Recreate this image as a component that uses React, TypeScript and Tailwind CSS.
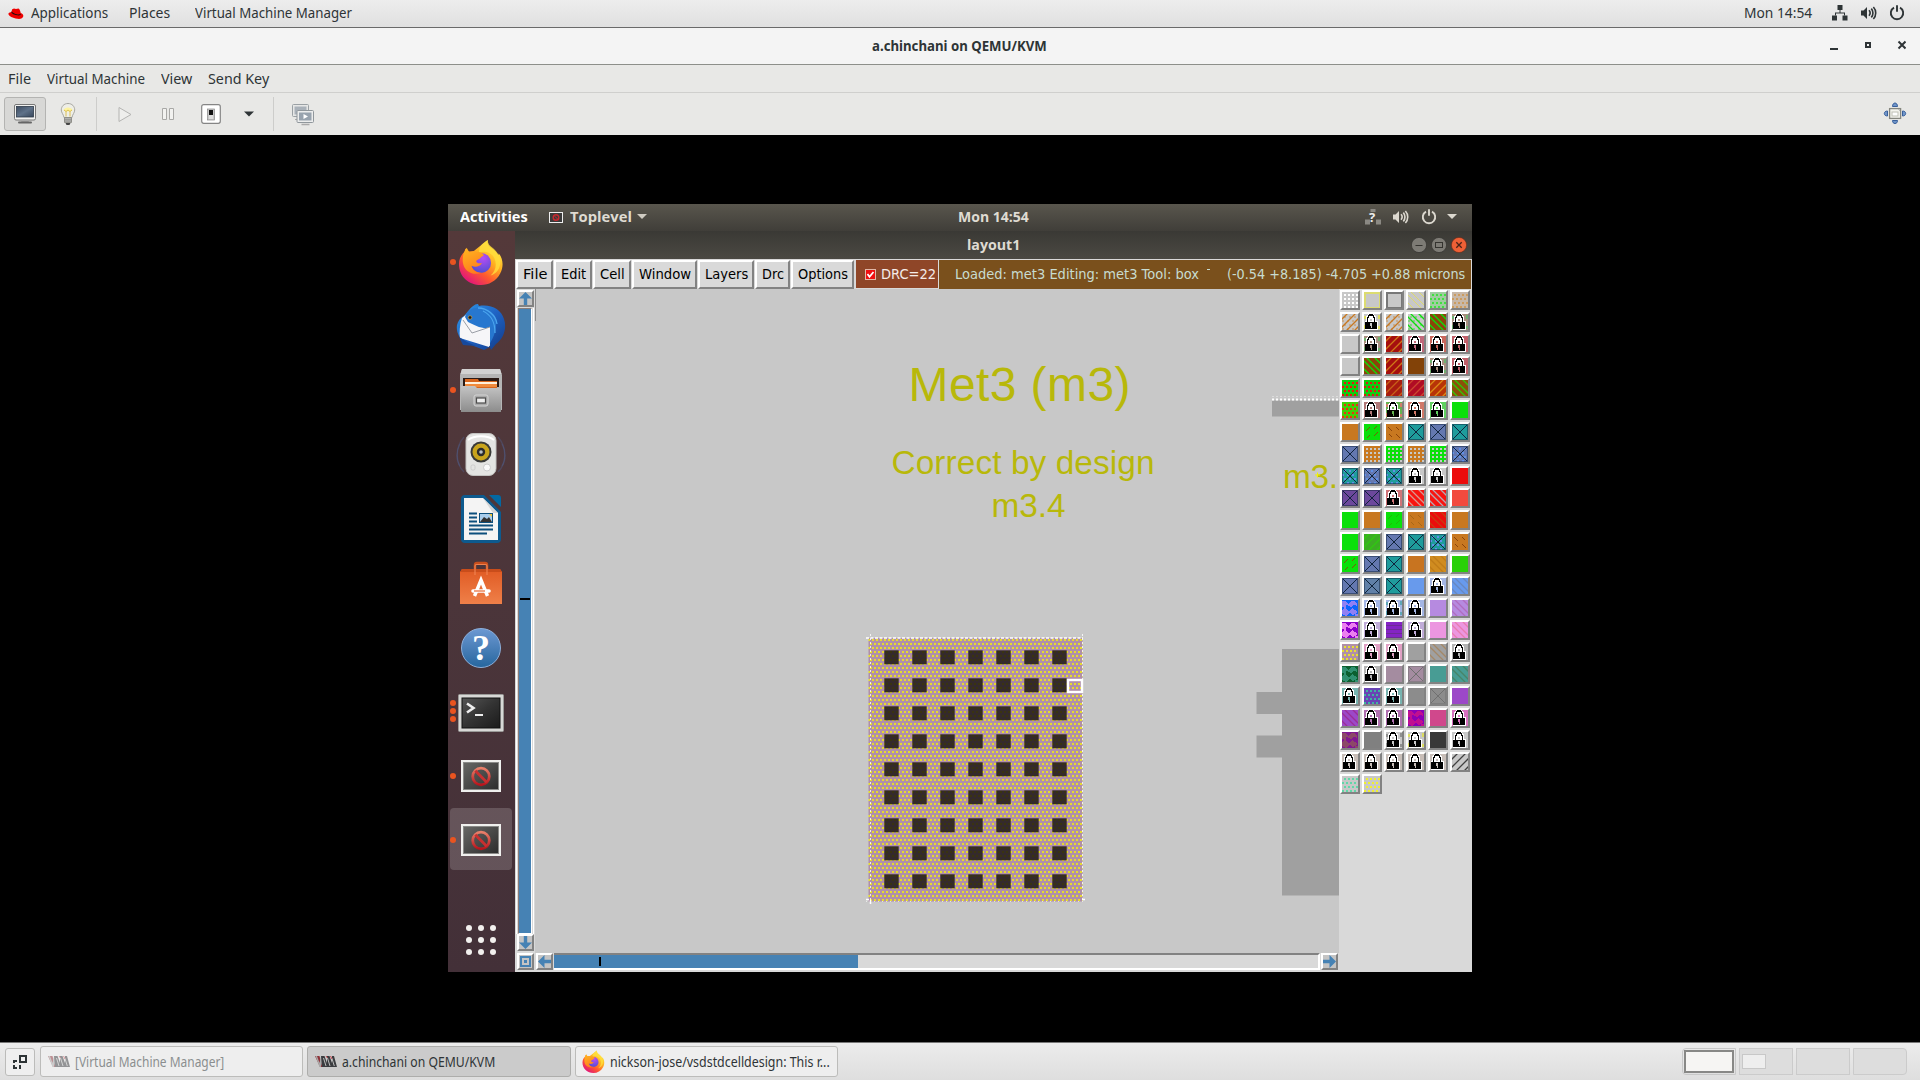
import React, { useLayoutEffect, useRef, useState } from "react";

/* Text set to an exact advance width by horizontal scaling. */
function Fit({ w, className = "", children }: { w: number; className?: string; children: string }) {
  const ref = useRef<HTMLSpanElement>(null);
  const [k, setK] = useState(1);
  useLayoutEffect(() => {
    const measure = () => {
      if (ref.current && ref.current.offsetWidth) setK(w / ref.current.offsetWidth);
    };
    measure();
    document.fonts?.ready.then(measure);
  }, [w, children]);
  return (
    <span className={`block shrink-0 whitespace-pre ${className}`} style={{ width: w }}>
      <span ref={ref} className="inline-block origin-left" style={{ transform: `scaleX(${k})` }}>
        {children}
      </span>
    </span>
  );
}

/* ---------- Host desktop icons ---------- */

const RedHat = () => (
  <svg width="16" height="12" viewBox="0 0 16 12">
    <path d="M4.2 1.2 6 .4 8 1l2.400-.5c1.200.4 2 2.500 2.300 4.500 1.700.6 2.900 1.900 2.600 3.300-.3 1.900-2.700 2.900-6 2.500C5 10.300.6 8.200.4 5.800c0-1 1.200-1.600 2.900-1.600z" fill="#e00" />
    <path d="M3.300 4.300c.6 1.500 3 2.700 5.700 3 2 .3 3.600 0 3.700-.8v-.8c-.6.900-2.300.9-4.200.5-2.200-.5-4.200-1.500-4.900-2.700z" fill="#111" />
  </svg>
);

const Network = () => (
  <svg width="16" height="16" viewBox="0 0 16 16" fill="#2e3436">
    <path d="M5.500 0h5v5h-5zM0 10.500h5v5H0zM10.500 10.500h5v5h-5z" />
    <path d="M7.500 5h1v2.500H13v3h-1v-2H4v2H3v-3h4.500z" />
  </svg>
);

const Speaker = ({ c }: { c: string }) => (
  <svg width="17" height="16" viewBox="0 0 17 16" fill="none" stroke={c} strokeWidth="1.600">
    <path d="M1 5.500h2.500L7 2v12L3.500 10.500H1z" fill={c} stroke="none" />
    <path d="M9 5.300c1.300 1.500 1.300 3.900 0 5.400M11.300 3.600c2.200 2.500 2.200 6.300 0 8.800M13.400 2c3.100 3.400 3.100 8.600 0 12" />
  </svg>
);

const Power = ({ c }: { c: string }) => (
  <svg width="16" height="16" viewBox="0 0 16 16" fill="none" stroke={c} strokeWidth="1.900">
    <path d="M5 2.600a6.200 6.200 0 1 0 6 0" />
    <path d="M8 .2v6.600" />
  </svg>
);

const Monitor = () => (
  <svg width="24" height="22" viewBox="0 0 24 22">
    <defs>
      <linearGradient id="scr" x1="0" y1="0" x2="1" y2="1">
        <stop offset="0" stopColor="#3c4b60" />
        <stop offset=".5" stopColor="#5f7289" />
        <stop offset="1" stopColor="#38475b" />
      </linearGradient>
    </defs>
    <rect x="1.500" y="1.500" width="21" height="15.500" rx="1.500" fill="#f2f2f0" stroke="#777" />
    <rect x="3.500" y="3.500" width="17" height="10.500" fill="url(#scr)" stroke="#2f3b4a" strokeWidth=".8" />
    <path d="M9 17h6l1 2H8z" fill="#aaa" />
    <rect x="5" y="18.500" width="14" height="2" rx="1" fill="#666" />
  </svg>
);

const Bulb = () => (
  <svg width="18" height="24" viewBox="0 0 18 24">
    <path d="M9 1.500c-4 0-6.700 2.900-6.700 6.400 0 3 2.200 4.300 2.700 7.600h8c.5-3.300 2.700-4.600 2.700-7.600C15.700 4.400 13 1.500 9 1.500z" fill="#eeeee6" stroke="#a6a6a0" />
    <path d="M4.500 8c1-3.500 8-3.500 9 0-1.500 2-7.500 2-9 0z" fill="#fdf3a0" />
    <path d="M5 8l2 1.500L9 8l2 1.500L13 8M7 9.500v5M11 9.500v5" fill="none" stroke="#d8b948" strokeWidth=".9" />
    <path d="M5.500 15.500h7v5h-7z" fill="#c5c5c2" stroke="#85857f" strokeWidth=".8" />
    <path d="M5.500 17.200h7M5.500 19h7" stroke="#777" strokeWidth=".8" />
    <path d="M6.500 21h5l-1 2h-3z" fill="#444" />
  </svg>
);

const Machines = () => (
  <svg width="24" height="24" viewBox="0 0 24 24">
    <rect x="1.500" y="2.500" width="16" height="12" rx="1" fill="#e6e7e6" stroke="#9aa0a4" />
    <rect x="3.500" y="4.500" width="12" height="8" fill="#a9b1b9" />
    <path d="M4 17.500h5v-2" stroke="#aaa" fill="none" />
    <rect x="6" y="8.500" width="16.500" height="12" rx="1" fill="#eceded" stroke="#90979c" />
    <rect x="8" y="10.500" width="12.500" height="8" fill="#98a3ae" />
    <path d="M12.500 12l4.500 2.500-4.500 2.500z" fill="#fff" />
    <path d="M10.500 22.500h8" stroke="#aaa" strokeWidth="1.500" />
  </svg>
);

const Fullscreen = () => (
  <svg width="24" height="24" viewBox="0 0 24 24">
    <g fill="#6f94c8" stroke="#38609c">
      <path d="M9.500 4.500c0-2 1-3.500 2.500-3.500s2.500 1.500 2.500 3.500zM9.500 18.500c0 2 1 3 2.500 3s2.500-1 2.500-3zM4.500 9C2.500 9 1.300 10 1.300 11.500S2.500 14 4.500 14zM19.500 9c2 0 3.200 1 3.200 2.500S21.500 14 19.500 14z" />
    </g>
    <rect x="6.600" y="6.600" width="11" height="9.800" fill="#f4f4ee" stroke="#85867f" strokeWidth="1.300" />
    <rect x="9" y="10" width="6" height="4" fill="#fff" stroke="#bfc0b6" />
    <path d="M15 7.500h1.500V9" stroke="#bbb" fill="none" />
  </svg>
);

const VmmLogo = ({ dim = false }: { dim?: boolean }) => (
  <svg width="22" height="13" viewBox="0 0 22 13" className={dim ? "opacity-50" : ""}>
    <path d="M0 1h4.500l3 11H5z" fill="#8f3238" />
    <path d="M2 1l2.500 7L6 1h2.500L5.800 12H4.500L.5 1z" fill="#a9a9a9" />
    <path d="M6 1h3.500l2.500 7V1h2.500L17 8V1h2l3 11H7z" fill="#3b3d40" />
    <path d="M8.500 3l2.500 8M12.500 3l2.500 8M16.800 3l2.500 8" stroke="#bdbdbd" strokeWidth="1" />
    <path d="M11 1l1.500 2M15.500 1L17 4" stroke="#c0444c" />
  </svg>
);

const Firefox = ({ size, id }: { size: number; id: string }) => (
  <svg width={size} height={size} viewBox="0 0 48 48">
    <defs>
      <linearGradient id={`${id}a`} x1=".85" y1=".1" x2=".2" y2=".95">
        <stop offset="0" stopColor="#fff04a" />
        <stop offset=".35" stopColor="#ffb020" />
        <stop offset=".65" stopColor="#ff5a2e" />
        <stop offset="1" stopColor="#e0127e" />
      </linearGradient>
      <radialGradient id={`${id}b`} cx=".6" cy=".25" r=".8">
        <stop offset="0" stopColor="#b84cf4" />
        <stop offset="1" stopColor="#4a4fd0" />
      </radialGradient>
      <linearGradient id={`${id}c`} x1=".2" y1="0" x2=".6" y2="1">
        <stop offset="0" stopColor="#ffb51f" />
        <stop offset="1" stopColor="#ff7a1c" />
      </linearGradient>
    </defs>
    <path d="M31 1c-1 5 2 7 6 10 3 3 4 4 5 6l.5-2C47 20 48 29 44 36c-4 8-12 12-20 12C11 48 1 39 1 26c0-6 3-10 6-13l.5-3 3 3 6-.500z" fill={`url(#${id}a)`} />
    <path d="M31 1c-7 4-9 8-9 13 6-2 13 0 16 6 3 7 1 14-4 18 7-2 11-9 10-16-.5-5-4-9-7-12-4-3-6-5-6-9z" fill="#ffdf3c" opacity=".8" />
    <circle cx="24" cy="25" r="10.500" fill={`url(#${id}b)`} />
    <path d="M9 9l3 5c2-1 5-1 7 0 3-1 6 0 8 3l-3 2c-1 2-4 2-5 4 0 2 3 3 6 2-2 4-7 5-11 3 1 4 5 8 11 7-9 4-19-1-20-11-.5-6 1-11 4-15z" fill={`url(#${id}c)`} />
  </svg>
);

/* ---------- Guest dock icons ---------- */

const Thunderbird = () => (
  <svg width="50" height="50" viewBox="0 0 50 50">
    <defs>
      <linearGradient id="tb" x1="0" y1="0" x2="1" y2="1">
        <stop offset="0" stopColor="#2f9be8" />
        <stop offset=".5" stopColor="#1f63c4" />
        <stop offset="1" stopColor="#123a86" />
      </linearGradient>
    </defs>
    <path d="M13 7C17 2 20 1 22 1l1 2c12-2 22 3 25 13 3 9 0 19-8 25l-5 6-1-3-6 3-18-7C3 36 0 29 1 22c1-4 3-7 7-9z" fill="url(#tb)" />
    <path d="M6 15l5-4 6-4 16 19 1 9-1 9-29-9c-1-6 0-14 2-20z" fill="#f6f6f8" />
    <path d="M9 14c2-7 9-10 15-9 8 0 14 6 16 12 1 9-2 17-7 25 1-6 1-12 0-17-8 1-15-3-21-6z" fill="#2777cf" />
    <path d="M22 5c9 0 18 7 19 16M27 8c8 4 12 10 12 22" stroke="#4ba5ee" strokeWidth="1.300" fill="none" />
    <circle cx="14" cy="14.500" r="1.800" fill="#1b1b1b" stroke="#c89b3d" strokeWidth=".7" />
    <path d="M3 34l8 5 9 4-13-1z" fill="#17499c" />
    <path d="M16 30L34 24V43L6 35L5 24L7 17z" fill="#f6f6f8" />
    <path d="M7 17l9 13 18-6" fill="none" stroke="#8f949c" strokeWidth=".9" />
  </svg>
);

const Files = () => (
  <svg width="44" height="46" viewBox="0 0 44 46">
    <defs>
      <linearGradient id="fl" x1="0" y1="0" x2="0" y2="1">
        <stop offset="0" stopColor="#c4c4c4" />
        <stop offset="1" stopColor="#8c8c8c" />
      </linearGradient>
    </defs>
    <path d="M3 1h38l2 6v35H1V7z" fill="#b5b5b5" />
    <path d="M3 1h38l1.500 5h-41z" fill="#d2d2d2" />
    <path d="M4 10h36v9H4z" fill="#2b1b16" />
    <path d="M6 11l13 0 1 2h18v7H6z" fill="#d7651d" />
    <path d="M6 14h32v2H6z" fill="#fff0dc" />
    <path d="M6 16h32v3H6z" fill="#f08a3c" />
    <path d="M2 18h14l2 2h24v24H2z" fill="url(#fl)" />
    <rect x="15" y="27" width="14" height="11" rx="2" fill="#aaa" stroke="#d5d5d5" />
    <rect x="17.500" y="30" width="9" height="5" fill="#eee" stroke="#4d4d4d" strokeWidth="1.200" />
  </svg>
);

const Rhythmbox = () => (
  <svg width="50" height="46" viewBox="0 0 50 46">
    <g fill="none" stroke="#50608c" strokeWidth="1.300">
      <path d="M8 5c-9 10-9 26 0 35M42 5c9 10 9 26 0 35" opacity=".4" />
      <path d="M4 12c-4 7-4 16 0 22M46 12c4 7 4 16 0 22" opacity=".4" />
    </g>
    <rect x="10" y="1.500" width="30" height="42" rx="7" fill="#e4e4e2" stroke="#c2c2c0" />
    <path d="M12 8c6-5 20-5 26 0" stroke="#fff" strokeWidth="2" fill="none" />
    <circle cx="25" cy="20" r="10.500" fill="#3a3a38" />
    <circle cx="25" cy="20" r="8.500" fill="#c9a41c" />
    <circle cx="25" cy="20" r="4.200" fill="#2c2c2c" />
    <circle cx="25" cy="20" r="1.800" fill="#b8c0c8" />
    <circle cx="31" cy="35.500" r="3.500" fill="#fafafa" stroke="#ccc" />
    <rect x="15" y="33" width="4" height="5" rx="1.500" fill="none" stroke="#ccc" />
  </svg>
);

const Writer = () => (
  <svg width="40" height="48" viewBox="0 0 40 48">
    <path d="M4 0h19l17 17v27a4 4 0 0 1-4 4H4a4 4 0 0 1-4-4V4a4 4 0 0 1 4-4z" fill="#0d5a8e" />
    <path d="M28 0h9a3 3 0 0 1 3 3v9z" fill="#0369a3" />
    <path d="M3 3h19l15 15v27H3z" fill="#f4f4f4" />
    <path d="M22 3l15 15h-5z" fill="#d5d5d5" />
    <path d="M8 18.500h8M8 22.500h8M8 26.500h8M8 30.500h24M8 34.500h24M8 38.500h18" stroke="#0d4f7d" strokeWidth="2" />
    <rect x="18.500" y="18.500" width="13" height="9" fill="#a9cdec" stroke="#0d4f7d" />
    <path d="M19 27l4-5 3 2 2-2 3 5z" fill="#333" />
    <path d="M28 19h3v3z" fill="#f4c430" />
  </svg>
);

const Software = () => (
  <svg width="42" height="44" viewBox="0 0 42 44">
    <defs>
      <linearGradient id="sw" x1="0" y1="0" x2="0" y2="1">
        <stop offset="0" stopColor="#e05a23" />
        <stop offset="1" stopColor="#ef8049" />
      </linearGradient>
    </defs>
    <path d="M15 14V4q0-2 2-2h8q2 0 2 2v10" fill="none" stroke="#c84f1d" strokeWidth="2.500" />
    <path d="M2 8h38l2 3v32H0V11z" fill="url(#sw)" />
    <path d="M2 8h38l2 3H0z" fill="#c94d1b" />
    <path d="M15 14V5q0-1.500 1.500-1.500h9Q27 3.500 27 5v9" fill="none" stroke="#ee8250" strokeWidth="1.200" />
    <path d="M14.500 35 L21 19 L27.500 35" fill="none" stroke="#fff" strokeWidth="3.400" />
    <path d="M13 30h16" stroke="#fff" strokeWidth="3.600" strokeLinecap="round" />
    <path d="M14 30h11" stroke="#e8672f" strokeWidth="1.200" />
  </svg>
);

const Help = () => (
  <div className="flex size-10 items-center justify-center rounded-full border border-[#8db0dc] bg-gradient-to-b from-[#6b98d2] to-[#26679f]">
    <span className="font-['Liberation_Serif',serif] text-[36px] leading-none font-bold text-white">?</span>
  </div>
);

const Terminal = () => (
  <svg width="46" height="38" viewBox="0 0 46 38">
    <defs>
      <linearGradient id="tm" x1="0" y1="0" x2="1" y2="1">
        <stop offset="0" stopColor="#555" />
        <stop offset=".5" stopColor="#333" />
        <stop offset="1" stopColor="#1b1b1b" />
      </linearGradient>
    </defs>
    <rect x=".5" y=".5" width="45" height="37" rx="1" fill="#d8d8d6" stroke="#9a9a98" />
    <rect x="4" y="4" width="38" height="30" fill="url(#tm)" stroke="#111" />
    <path d="M9 9.500l6.500 4.500L9 18.500" fill="none" stroke="#eee" strokeWidth="2.600" />
    <path d="M17 21h8" stroke="#eee" strokeWidth="2" />
  </svg>
);

const Forbidden = ({ id }: { id: string }) => (
  <svg width="40" height="32" viewBox="0 0 40 32">
    <defs>
      <linearGradient id={id} x1="0" y1="0" x2="1" y2="1">
        <stop offset="0" stopColor="#6a6a68" />
        <stop offset="1" stopColor="#2a2a2a" />
      </linearGradient>
      <linearGradient id={`${id}r`} x1="0" y1="0" x2="0" y2="1">
        <stop offset="0" stopColor="#e8806a" />
        <stop offset="1" stopColor="#b8141c" />
      </linearGradient>
    </defs>
    <rect x="1" y="1" width="38" height="30" fill={`url(#${id})`} stroke="#f0f0ee" strokeWidth="2" />
    <rect x="2.500" y="2.500" width="35" height="27" fill="none" stroke="#8a8a88" />
    <circle cx="20" cy="16.500" r="8.300" fill="none" stroke={`url(#${id}r)`} strokeWidth="2.800" />
    <path d="M14.300 10.800l11.400 11.400" stroke="#c83030" strokeWidth="2.800" />
  </svg>
);

/* ---------- Layer palette ---------- */

type Kind = "s" | "o" | "d" | "f" | "b" | "fd" | "bd" | "fs" | "bs" | "x" | "xd" | "l" | "w" | "h";
type Sw = [Kind, string, string?];

const C = "#c8c8c8";
const G = "#0ae00a";
const O = "#c87820";
const T = "#1f9c9c";
const B = "#6478b0";

const LAYERS: Sw[] = [
  ["d", C, "#ffffff"], ["o", C, "#dcdc70"], ["o", C, "#787878"], ["b", C, "#e0dc60"], ["d", "#a0cca0", "#40e040"], ["d", "#c8b8a8", "#cc9c60"],
  ["fd", C, O], ["l", C, "#dcdc60"], ["fd", C, O], ["bd", C, G], ["b", "#8c440a", G], ["l", "#a98f7f", "#70b070"],
  ["s", C], ["l", "#a98f7f", "#70b070"], ["f", "#a50f0f", "#d07818"], ["l", "#c0687a"], ["l", "#c8675c"], ["l", "#c0606a"],
  ["s", C], ["b", "#8c440a", G], ["f", "#a50f0f", "#d07818"], ["s", "#824208"], ["l", "#a98f7f", "#70b070"], ["l", "#c0606a"],
  ["d", "#10cc10", "#f01010"], ["d", "#10cc10", "#e01818"], ["f", "#a81c10", "#c86018"], ["f", "#b00c24", "#cc4830"], ["f", "#b83408", "#dc8c18"], ["b", "#8c500a", "#30c808"],
  ["d", "#40d008", "#f03010"], ["l", "#b07878"], ["l", "#64b450", "#d08068"], ["l", "#d07868"], ["l", "#60d060"], ["s", G],
  ["s", O], ["fs", G, "#7c5808"], ["bs", O, "#8c440a"], ["x", T], ["x", B], ["x", T],
  ["x", B], ["d", O, C], ["d", G, C], ["d", O, C], ["d", G, C], ["xd", B, "#6090e8"],
  ["xd", T, "#6090e8"], ["xd", B, "#6090e8"], ["xd", T, "#6090e8"], ["l", C], ["l", C], ["s", "#ec0c0c"],
  ["x", "#6c489c"], ["x", "#6c489c"], ["l", "#d07478"], ["b", "#f81410", "#d89890"], ["b", "#f81410", "#b8a8b0"], ["s", "#f24a3e"],
  ["s", G], ["s", O], ["fs", G, "#20b808"], ["bs", O, "#a86818"], ["b", "#ec0c0c", "#c83c10"], ["s", O],
  ["s", G], ["f", "#3cac24", "#30c810"], ["x", B], ["x", T], ["xd", T, "#6090e8"], ["bs", O, "#8c440a"],
  ["fs", G, "#7c5808"], ["x", B], ["x", T], ["s", "#c87420"], ["b", "#d08c20", "#c07c18"], ["s", "#28d008"],
  ["x", B], ["x", "#6080a8"], ["x", T], ["s", "#689aec"], ["l", "#a4b6e4"], ["b", "#689aec", "#6888c0"],
  ["w", "#0c64fc", "#9080f4"], ["l", "#a4b6e4"], ["l", "#a4b6e4", "#60a8b8"], ["l", "#a4b6e4"], ["s", "#b68ae0"], ["b", "#b68ae0", "#b06cc0"],
  ["w", "#8c00cc", "#ec80f0"], ["l", "#c0acd8"], ["h", "#8424c4", "#6c2c94"], ["l", "#c0acd8"], ["s", "#ec96e0"], ["b", "#ec96e0", "#e87cb0"],
  ["d", "#b090a8", "#e8e030"], ["l", "#e0a0c4"], ["l", "#e0a0c4"], ["s", "#a0a0a0"], ["b", "#a0a0a0", "#a48868"], ["l", "#b4b4b4"],
  ["w", "#0c6030", "#309070"], ["l", "#b4b4b4"], ["s", "#a48ca0"], ["x", "#a48ca0"], ["s", "#489c94"], ["b", "#489c94", "#488468"],
  ["l", "#78b4b0"], ["d", "#6844b4", "#40b4a0"], ["l", "#78b4b0"], ["s", "#8c8c8c"], ["x", "#8c8c8c"], ["s", "#9c48c8"],
  ["b", "#9c48c8", "#9c2c98"], ["l", "#b070b0"], ["l", "#b070b0"], ["w", "#8c00b4", "#c01090"], ["s", "#d0488c"], ["l", "#d870c0"],
  ["w", "#801890", "#8c4868"], ["s", "#808080"], ["l", C, "#909090"], ["l", C, "#dcdc60"], ["s", "#383838"], ["l", C],
  ["l", "#c8beb8"], ["l", "#c8beb8"], ["l", "#c8beb8"], ["l", "#c8beb8"], ["l", "#c8beb8"], ["f", C, "#404040"],
  ["d", C, "#60d8a8"], ["d", C, "#f0f030"],
];

const FWD = "M-1 6L6-1M-1 14L14-1M3 18L18 3M11 18L18 11";
const BACK = "M10-1L17 6M2-1L17 14M-1 2L14 17M-1 10L6 17";
const DOTS = "M2 2h2v2h-2zM6 2h2v2h-2zM10 2h2v2h-2zM14 2h2v2h-2zM0 6h2v2h-2zM4 6h2v2h-2zM8 6h2v2h-2zM12 6h2v2h-2zM2 10h2v2h-2zM6 10h2v2h-2zM10 10h2v2h-2zM14 10h2v2h-2zM0 14h2v2h-2zM4 14h2v2h-2zM8 14h2v2h-2zM12 14h2v2h-2z";
const GRID = "M2 2h2v2h-2zM6 2h2v2h-2zM10 2h2v2h-2zM14 2h2v2h-2zM2 6h2v2h-2zM6 6h2v2h-2zM10 6h2v2h-2zM14 6h2v2h-2zM2 10h2v2h-2zM6 10h2v2h-2zM10 10h2v2h-2zM14 10h2v2h-2zM2 14h2v2h-2zM6 14h2v2h-2zM10 14h2v2h-2zM14 14h2v2h-2z";
const CHECK = "M2 2h2v2h-2zM7 2h2v2h-2zM12 2h2v2h-2zM0 6h2v2h-2zM5 6h2v2h-2zM10 6h2v2h-2zM2 10h2v2h-2zM7 10h2v2h-2zM12 10h2v2h-2zM0 14h2v2h-2zM5 14h2v2h-2zM10 14h2v2h-2z";

function Swatch({ sw: [kind, a, b = C] }: { sw: Sw }) {
  const faint = a === "#a48ca0" || a === "#8c8c8c";
  return (
    <div className="size-5 border-2 border-t-white border-r-[#828282] border-b-[#828282] border-l-white">
      <svg width="16" height="16" viewBox="0 0 16 16" className="block" shapeRendering="crispEdges">
        <rect width="16" height="16" fill={a} />
        {kind === "o" && <rect x=".5" y=".5" width="15" height="15" fill="none" stroke={b} strokeWidth="2" />}
        {kind === "d" && <path d={(a === C && b === "#ffffff") || b === C ? GRID : DOTS} fill={b} />}
        {(kind === "fd" || kind === "bd") && <path d={CHECK} fill={b} opacity=".35" />}
        {(kind === "f" || kind === "fd") && <path d={FWD} stroke={b} strokeWidth="1.300" shapeRendering="auto" />}
        {(kind === "b" || kind === "bd") && <path d={BACK} stroke={b} strokeWidth={a === C && kind === "b" ? ".9" : "1.300"} shapeRendering="auto" />}
        {kind === "fs" && <path d="M2 7l4-4M10 5l3-3M3 14l3-3M10 12l4-4" stroke={b} />}
        {kind === "bs" && <path d="M2 3l4 4M10 3l3 3M3 10l3 3M10 10l4 4" stroke={b} />}
        {kind === "xd" && <path d={CHECK} fill={b} />}
        {(kind === "x" || kind === "xd") && (
          <g stroke={faint ? "#707070" : "#10243c"}>
            <path d="M1 1l14 14M15 1L1 15" />
            <rect x=".5" y=".5" width="15" height="15" fill="none" opacity=".5" />
          </g>
        )}
        {kind === "w" && <path d="M0 1h4l2 3 3-3h3l3 3v2l-3-1-3 2-4-2-3 2H0zM0 10l3-2 4 3 3-3 5 3v2l-4 2-3-2-4 3-4-2zM8 5h2v2H8zM13 14h3v2h-3zM2 5h2v4H2z" fill={b} />}
        {kind === "h" && <path d="M0 3.500h16M0 7.500h16M0 11.500h16M0 15.500h16" stroke={b} />}
        {kind === "l" && (
          <g>
            {b !== C && <path d="M0 2h2v3H0zM14 1h2v4h-2zM0 11h1v4H0zM14 12h2v3h-2z" fill={b} />}
            <path d="M1 7h1V3l2-3h6l2 3v4h2v9H1z" fill="#fff" />
            <path d="M3 8V3h1V1h1V0h4v1h1v2h1v5h-1V5H9V3H8V2H6v1H5v2H4v3z" fill="#000" />
            <path d="M4 7V4h1V2h4v2h1v3H9V5H8V4H6v1H5v2z" fill="#fff" />
            <rect x="1" y="8" width="12" height="7" fill="#000" />
            <path d="M6 5h2v2H6zM6 9h2v2.500h-.5V14h-1v-2.500H6z" fill={a} />
          </g>
        )}
      </svg>
    </div>
  );
}

/* ---------- Guest widgets ---------- */

type Dir = "up" | "down" | "left" | "right";
const ROT: Record<Dir, string> = { up: "", down: "rotate-180", left: "-rotate-90", right: "rotate-90" };

function Arrow({ dir }: { dir: Dir }) {
  return (
    <div className="size-[17px] shrink-0 border-2 border-t-white border-r-[#828282] border-b-[#828282] border-l-white bg-[#c4c4c4]">
      <svg width="13" height="13" viewBox="0 0 13 13" className={`block ${ROT[dir]}`}>
        <path d="M6.500 0L13 6.500H8.200V13H4.800V6.500H0z" fill="#4682b4" />
      </svg>
    </div>
  );
}

function MenuButton({ w, tw, children }: { w: string; tw: number; children: string }) {
  return (
    <div className={`flex h-[29px] shrink-0 items-center justify-center border-2 border-t-white border-r-[#828282] border-b-[#828282] border-l-white bg-[#d9d9d9] pb-0.5 text-black ${w}`}>
      <Fit w={tw}>{children}</Fit>
    </div>
  );
}

function DockItem({ dots = 0, active = false, pad = "", children }: { dots?: number; active?: boolean; pad?: string; children: React.ReactNode }) {
  return (
    <div className="relative ml-0.5 flex h-[64.200px] w-[62px] items-center justify-center">
      {active && <div className="absolute inset-x-0 top-0 h-[62px] rounded bg-white/17" />}
      <div className="absolute left-0 flex flex-col gap-0.5">
        {Array.from({ length: dots }, (_, i) => (
          <div key={i} className="size-1.5 rounded-full bg-[#e95420]" />
        ))}
      </div>
      <div className={`relative ${pad}`}>{children}</div>
    </div>
  );
}

function Layout() {
  const cells = [];
  for (let r = 0; r < 9; r++)
    for (let c = 0; c < 7; c++)
      cells.push(<rect key={`${r}-${c}`} x={349.300 + c * 28} y={361.300 + r * 28} width="14.400" height="14" fill="url(#cut)" />);
  return (
    <svg width="804" height="664" viewBox="0 0 804 664" className="block">
      <defs>
        <pattern id="met" width="4" height="8" x="333" y="349" patternUnits="userSpaceOnUse">
          <rect width="4" height="8" fill="#b08fa9" />
          <rect x="0" y="1" width="2" height="2" fill="#e6dc2c" />
          <rect x="2" y="5" width="2" height="2" fill="#e6dc2c" />
        </pattern>
        <pattern id="cut" width="4" height="8" x="333" y="349" patternUnits="userSpaceOnUse">
          <rect width="4" height="8" fill="#342a2c" />
          <rect x="0" y="1" width="2" height="2" fill="#3a3410" />
          <rect x="2" y="5" width="2" height="2" fill="#3a3410" />
        </pattern>
      </defs>
      <path d="M.5 0v32" stroke="#8c8c8c" />
      <g fill="#b8b80a" fontFamily="'Liberation Sans', Arial, sans-serif">
        <text x="373.500" y="112" fontSize="48" textLength="222">Met3 (m3)</text>
        <text x="356.500" y="185" fontSize="33.400" textLength="263">Correct by design</text>
        <text x="456.500" y="228" fontSize="33.400" textLength="74">m3.4</text>
        <text x="748" y="199" fontSize="33.400" textLength="55">m3.</text>
      </g>
      <path d="M780 186h5M782.500 183.500v5" stroke="#f4f400" />
      <path d="M737 111.500h67v16h-67zM747 360h57v246.500h-57V468.500h-25.500v-22H747V425h-25.500v-22H747z" fill="#a0a0a0" />
      <path d="M737 110.500h67" stroke="#fff" strokeWidth="2" strokeDasharray="2 2" />
      <path d="M737 107.500h67" stroke="#dcdcdc" strokeDasharray="2 2" />
      <rect x="333.500" y="349" width="214" height="263.500" fill="url(#met)" />
      {cells}
      <g fill="none" stroke="#fff">
        <path d="M331 349h217" strokeWidth="1.300" strokeDasharray="3 1.500" />
        <path d="M335.500 345v268M547.500 345v268" strokeDasharray="2 2" opacity=".8" />
        <path d="M331 612.500h217" strokeDasharray="1 3" opacity=".6" />
        <path d="M331 610.500h3M335.500 611v4M547 610.500h3" strokeWidth="1.500" />
      </g>
      <rect x="533" y="391" width="14" height="12" fill="none" stroke="#fff" strokeWidth="2.400" />
    </svg>
  );
}

function Guest() {
  return (
    <div className="flex h-[768px] w-[1024px] flex-col overflow-hidden bg-[#d9d9d9]">
      <div className="flex h-[27px] shrink-0 items-center bg-gradient-to-b from-[#59564d] to-[#403e39] pb-0.5 font-['Open_Sans',sans-serif] text-[15px] leading-none font-bold text-[#dfdbd2]">
        <Fit w={68} className="ml-3 text-white">Activities</Fit>
        <svg width="14" height="11" viewBox="0 0 14 11" className="mt-0.5 ml-[21px]">
          <rect x=".5" y=".5" width="13" height="10" fill="#3a3a3a" stroke="#eee" />
          <circle cx="7" cy="5.500" r="2.800" fill="none" stroke="#c8282e" strokeWidth="1.400" />
          <path d="M5 3.500l4 4" stroke="#c8282e" />
        </svg>
        <Fit w={62} className="ml-[7px]">Toplevel</Fit>
        <svg width="10" height="5" viewBox="0 0 10 5" className="ml-[5px]"><path d="M0 0h10L5 5z" fill="#cfcbc2" /></svg>
        <Fit w={71} className="ml-[311px]">Mon 14:54</Fit>
        <div className="relative ml-[336px] h-4 w-4">
          <svg width="16" height="16" viewBox="0 0 16 16" fill="#8b8983">
            <path d="M5.500 0h5v3h-5zM0 10.500h5v5H0zM11 10.500h5v5h-5z" />
          </svg>
          <span className="absolute top-[2px] left-[4px] text-[13px] leading-none text-[#eee]">?</span>
        </div>
        <div className="ml-[11px]"><Speaker c="#dcd8cf" /></div>
        <div className="ml-3"><Power c="#dcd8cf" /></div>
        <svg width="10" height="5" viewBox="0 0 10 5" className="ml-[10px]"><path d="M0 0h10L5 5z" fill="#dcd8cf" /></svg>
      </div>

      <div className="flex min-h-0 flex-1">
        <div className="flex w-[67px] shrink-0 flex-col bg-gradient-to-b from-[#54393a] via-[#4b353a] to-[#433038]">
          <div className="-mt-px flex flex-col">
            <DockItem dots={1}><Firefox size={46} id="dockff" /></DockItem>
            <DockItem pad="pt-1"><Thunderbird /></DockItem>
            <DockItem dots={1} pad="pt-0.5"><Files /></DockItem>
            <DockItem><Rhythmbox /></DockItem>
            <DockItem><Writer /></DockItem>
            <DockItem><Software /></DockItem>
            <DockItem pad="pt-0.5"><Help /></DockItem>
            <DockItem dots={3} pad="pt-1"><Terminal /></DockItem>
            <DockItem dots={1}><Forbidden id="fba" /></DockItem>
            <DockItem dots={1} active><Forbidden id="fbb" /></DockItem>
          </div>
          <div className="mt-[53px] ml-[18px] grid w-[30px] grid-cols-3 gap-1.5">
            {Array.from({ length: 9 }, (_, i) => (
              <div key={i} className="size-1.5 rounded-full bg-[#f2f0ee]" />
            ))}
          </div>
        </div>

        <div className="flex min-w-0 flex-1 flex-col">
          <div className="flex h-7 shrink-0 items-center bg-gradient-to-b from-[#3a3935] to-[#4b4943] pb-px font-['Open_Sans',sans-serif] text-[15px] leading-none font-bold text-[#dfdbd2]">
            <Fit w={53} className="mb-px ml-[451.500px]">layout1</Fit>
            <div className="ml-auto flex gap-1 pr-[5px]">
              <svg width="16" height="16" viewBox="0 0 16 16"><circle cx="8" cy="8" r="7.600" fill="#7d7b75" stroke="#383733" strokeWidth=".8" /><path d="M4.500 8.500h7" stroke="#34332f" /></svg>
              <svg width="16" height="16" viewBox="0 0 16 16"><circle cx="8" cy="8" r="7.600" fill="#7d7b75" stroke="#383733" strokeWidth=".8" /><rect x="4.500" y="5.500" width="7" height="5" fill="none" stroke="#34332f" /></svg>
              <svg width="16" height="16" viewBox="0 0 16 16"><circle cx="8" cy="8" r="7.600" fill="#ee6036" stroke="#6b2a18" strokeWidth=".6" /><path d="M5.300 5.300l5.400 5.400M10.700 5.300l-5.400 5.400" stroke="#4a2218" strokeWidth="1.300" /></svg>
            </div>
          </div>

          <div className="flex h-[30px] shrink-0 border-t border-[#d9d9d9] bg-[#7a501c] font-['DejaVu_Sans',sans-serif] text-[14px] leading-none">
            <div className="flex shrink-0 gap-px bg-[#d9d9d9] pr-0.5 pl-px">
              <MenuButton w="w-[37px]" tw={24}>File</MenuButton>
              <MenuButton w="w-[38px]" tw={25}>Edit</MenuButton>
              <MenuButton w="w-[38px]" tw={24.500}>Cell</MenuButton>
              <MenuButton w="w-[65px]" tw={52}>Window</MenuButton>
              <MenuButton w="w-[56px]" tw={43}>Layers</MenuButton>
              <MenuButton w="w-[35px]" tw={22}>Drc</MenuButton>
              <MenuButton w="w-[63px]" tw={50}>Options</MenuButton>
            </div>
            <div className="flex w-[83px] shrink-0 items-center border-r border-b border-[#d9d9d9] bg-[#8f4628] text-[#f4ece8]">
              <svg width="11" height="11" viewBox="0 0 11 11" className="ml-[9px]">
                <rect x=".5" y=".5" width="10" height="10" fill="#f01010" stroke="#e0b8a8" />
                <path d="M2.500 5l2 2.800L8.500 3" fill="none" stroke="#fff" strokeWidth="1.700" />
              </svg>
              <Fit w={55} className="ml-[5px]">DRC=22</Fit>
            </div>
            <div className="flex flex-1 items-center border-r border-[#d9d9d9] pb-0.5 text-[#c8dcd0]">
              <Fit w={244} className="ml-4">Loaded: met3 Editing: met3 Tool: box</Fit>
              <div className="mb-2 ml-[8px] h-px w-[3px] bg-[#c8dcd0]" />
              <Fit w={238} className="ml-[17px]">(-0.54 +8.185) -4.705 +0.88 microns</Fit>
            </div>
          </div>

          <div className="flex min-h-0 flex-1">
            <div className="flex w-[20px] shrink-0 flex-col items-center bg-[#d9d9d9] pt-px">
              <Arrow dir="up" />
              <div className="mt-px flex h-[626px] w-[18px] justify-center border-x border-white px-px">
                <div className="flex w-full items-center justify-center border border-[#8a7c78] border-r-white border-b-white bg-[#4682b4]">
                  <div className="mt-[-44px] h-0.5 w-2.5 bg-black" />
                </div>
              </div>
              <Arrow dir="down" />
              <div className="mt-[2px] flex size-[17px] items-center justify-center border-2 border-t-white border-r-[#828282] border-b-[#828282] border-l-white bg-[#c4c4c4]">
                <div className="flex size-[11px] items-center justify-center border-2 border-[#4682b4]">
                  <div className="size-[3px] bg-[#4682b4]" />
                </div>
              </div>
            </div>
            <div className="flex w-[804px] shrink-0 flex-col bg-[#c8c8c8]">
              <Layout />
              <div className="flex h-[19px] items-center bg-[#d9d9d9] px-px pb-0.5">
                <Arrow dir="left" />
                <div className="ml-px flex h-[17px] w-[766px] border-y-2 border-r-2 border-t-[#828282] border-r-white border-b-white">
                  <div className="flex w-[304px] items-center bg-[#4682b4]">
                    <div className="ml-[45px] h-[9px] w-0.5 bg-black" />
                  </div>
                </div>
                <div className="ml-px"><Arrow dir="right" /></div>
              </div>
            </div>
            <div className="flex-1 bg-[#d9d9d9] pt-px pl-px">
              <div className="grid w-[130px] grid-cols-6 gap-0.5">
                {LAYERS.map((l, i) => <Swatch key={i} sw={l} />)}
              </div>
            </div>
          </div>
        </div>
      </div>
    </div>
  );
}

export default function App() {
  return (
    <div className="flex h-[1080px] w-[1920px] flex-col overflow-hidden bg-black font-['Noto_Sans',sans-serif] text-[15px] leading-none text-[#2e3436]">
      <div className="flex h-7 shrink-0 items-center border-b border-[#6a6a6a] bg-gradient-to-b from-[#ededed] to-[#e0e0e0] pb-0.5 pl-2">
        <div className="mt-0.5"><RedHat /></div>
        <Fit w={77} className="ml-[7px]">Applications</Fit>
        <Fit w={41} className="ml-[21px]">Places</Fit>
        <Fit w={157.500} className="ml-[25px]">Virtual Machine Manager</Fit>
        <Fit w={68} className="ml-auto">Mon 14:54</Fit>
        <div className="ml-5"><Network /></div>
        <div className="ml-[12px]"><Speaker c="#2e3436" /></div>
        <div className="mr-[15px] ml-3"><Power c="#2e3436" /></div>
      </div>

      <div className="flex h-[37px] shrink-0 items-center border-b border-[#8d8f8a] bg-[#f4f4f4] pb-0.5 text-[14.500px] font-bold">
        <Fit w={175} className="ml-[872px]">a.chinchani on QEMU/KVM</Fit>
        <svg width="78" height="12" viewBox="0 0 78 12" className="mr-[14px] ml-auto">
          <path d="M2 9h8v2H2z" fill="#2e3436" />
          <rect x="38" y="4" width="4" height="4" fill="none" stroke="#2e3436" strokeWidth="2" />
          <path d="M70.500 2.500l7 7M77.500 2.500l-7 7" stroke="#2e3436" strokeWidth="2" />
        </svg>
      </div>

      <div className="flex h-7 shrink-0 items-center border-b border-[#cfcfcd] bg-[#e8e8e6] pl-2">
        <Fit w={23}>File</Fit>
        <Fit w={98} className="ml-4">Virtual Machine</Fit>
        <Fit w={31.500} className="ml-4">View</Fit>
        <Fit w={61} className="ml-[15.500px]">Send Key</Fit>
      </div>

      <div className="flex h-[42px] shrink-0 items-center bg-[#e8e8e6] pl-1">
        <div className="flex h-[34px] w-[42px] items-center justify-center rounded-[3px] border border-[#b4b4b2] bg-[#d8d8d6]"><Monitor /></div>
        <div className="ml-[13px]"><Bulb /></div>
        <div className="ml-[19px] h-[34px] w-px bg-[#cdcdcb]" />
        <svg width="16" height="17" viewBox="0 0 16 17" className="ml-[20px]"><path d="M2 1.500v14l12-7z" fill="#eeeeec" stroke="#b4b4b2" /></svg>
        <svg width="14" height="14" viewBox="0 0 14 14" className="ml-[28px]"><path d="M1.500 1.500h4v11h-4zM8.500 1.500h4v11h-4z" fill="#f2f2f0" stroke="#a8a8a6" /></svg>
        <svg width="20" height="20" viewBox="0 0 20 20" className="ml-[26px]">
          <rect x=".7" y=".7" width="18.600" height="18.600" rx="2" fill="#fff" stroke="#858585" strokeWidth="1.200" />
          <rect x="6.500" y="5" width="7" height="11" fill="#c8c8c8" stroke="#888" strokeWidth=".7" />
          <rect x="8" y="6" width="4" height="5" fill="#111" />
          <rect x="8" y="11" width="4" height="4" fill="#ddd" />
        </svg>
        <svg width="10" height="6" viewBox="0 0 10 6" className="ml-[23px]"><path d="M0 .5h10L5 5.500z" fill="#2e3436" /></svg>
        <div className="ml-[19px] h-[34px] w-px bg-[#cdcdcb]" />
        <div className="ml-[17px]"><Machines /></div>
        <div className="mr-[13px] ml-auto"><Fullscreen /></div>
      </div>

      <div className="flex h-[907px] shrink-0 justify-center bg-black pt-[69px]">
        <Guest />
      </div>

      <div className="flex h-[38px] shrink-0 items-center border-t border-[#777] bg-gradient-to-b from-[#ececec] to-[#dedede] pl-[5px]">
        <div className="flex h-7 w-[30px] items-center justify-center rounded-[3px] border border-[#bcbcba] bg-[#efefef]">
          <svg width="14" height="14" viewBox="0 0 14 14" fill="none" stroke="#2e3436" strokeWidth="2">
            <rect x="7" y="1" width="6" height="6" />
            <path d="M4 6H1v2M1 10v3h3M6 13h1v-3" />
          </svg>
        </div>
        <div className="ml-[5px] flex h-[31px] w-[263px] items-center rounded-[3px] border border-[#bcbcba] bg-[#eeeeee] pl-[7px] text-[#8b8e8f]">
          <VmmLogo dim />
          <Fit w={149} className="ml-[5px]">[Virtual Machine Manager]</Fit>
        </div>
        <div className="ml-1 flex h-[31px] w-[264px] items-center rounded-[3px] border border-[#adadab] bg-[#cbcbcb] pl-[7px]">
          <VmmLogo />
          <Fit w={153} className="ml-[5px]">a.chinchani on QEMU/KVM</Fit>
        </div>
        <div className="ml-1 flex h-[31px] w-[263px] items-center rounded-[3px] border border-[#bcbcba] bg-[#eeeeee] pl-[6px]">
          <Firefox size={23} id="taskff" />
          <Fit w={220} className="ml-[5px]">nickson-jose/vsdstdcelldesign: This r...</Fit>
        </div>
        <div className="mr-[13px] ml-auto flex gap-[3px]">
          <div className="h-[27px] w-[54px] rounded-l border border-[#c8c8c8] p-px pt-px">
            <div className="h-full w-full border-2 border-[#888886] bg-[#f6f5f3]" />
          </div>
          <div className="flex h-[27px] w-[54px] items-center border border-[#cbcbcb] bg-[#dddddd] pl-0.5">
            <div className="h-[15px] w-6 border border-[#c8c8c8] bg-[#eeeeee]" />
          </div>
          <div className="h-[27px] w-[54px] border border-[#cbcbcb] bg-[#dddddd]" />
          <div className="h-[27px] w-[54px] rounded-r border border-[#cbcbcb] bg-[#dddddd]" />
        </div>
      </div>
    </div>
  );
}
